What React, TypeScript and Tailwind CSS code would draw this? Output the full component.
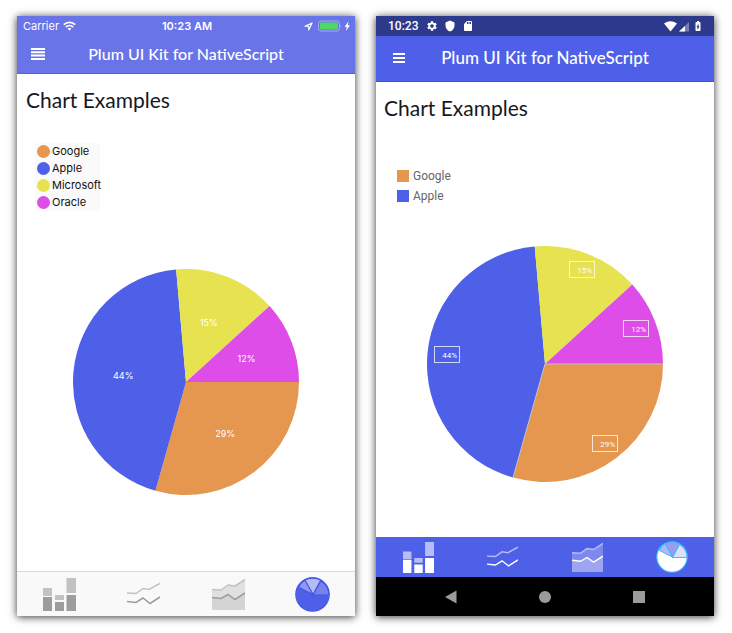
import { MdBatteryChargingFull, MdSdCard, MdSettings, MdShield } from "react-icons/md";

type Slice = {
  name: string;
  share: string;
  color: string;
  start: number;
  end: number;
};

const slices: Slice[] = [
  { name: "Google", share: "29%", color: "#e5964f", start: 254.3, end: 360 },
  { name: "Apple", share: "44%", color: "#4e5fe8", start: 95, end: 254.3 },
  { name: "Microsoft", share: "15%", color: "#e6e250", start: 42.3, end: 95 },
  { name: "Oracle", share: "12%", color: "#df4de8", start: 0, end: 42.3 },
];

function polar(center: number, radius: number, degrees: number): [number, number] {
  const a = (degrees * Math.PI) / 180;
  return [center + radius * Math.cos(a), center - radius * Math.sin(a)];
}

function slicePath(center: number, radius: number, slice: Slice) {
  const [x1, y1] = polar(center, radius, slice.start);
  const [x2, y2] = polar(center, radius, slice.end);
  return `M${center} ${center}L${x1} ${y1}A${radius} ${radius} 0 0 0 ${x2} ${y2}Z`;
}

function IosPie() {
  return (
    <svg viewBox="0 0 226 226" className="mx-auto w-[226px]" role="img" aria-label="Market share">
      {slices.map((s) => {
        const [x, y] = polar(113, s.name === "Oracle" || s.name === "Google" ? 65 : 63, (s.start + s.end) / 2);
        return (
          <g key={s.name}>
            <path d={slicePath(113, 113, s)} fill={s.color} />
            <text
              x={x}
              y={y + 3}
              textAnchor="middle"
              className="fill-white font-['Inter',sans-serif] text-[9px]"
            >
              {s.share}
            </text>
          </g>
        );
      })}
    </svg>
  );
}

function AndroidPie() {
  const edge = [polar(118, 118, 0), polar(118, 118, 254.3)];
  return (
    <svg viewBox="0 0 236 236" className="mx-auto w-[236px]" role="img" aria-label="Market share">
      {slices.map((s) => (
        <path key={s.name} d={slicePath(118, 118, s)} fill={s.color} />
      ))}
      {edge.map(([x, y]) => (
        <path key={x} d={`M118 118L${x} ${y}`} stroke="#c3c2c4" strokeWidth="1" />
      ))}
      {slices.map((s) => {
        const [x, y] = polar(118, s.name === "Google" ? 100 : s.name === "Microsoft" ? 101 : 98, (s.start + s.end) / 2);
        return (
          <g key={s.name}>
            <rect
              x={Math.round(x) - 12.5}
              y={Math.round(y) - 8.5}
              width="25"
              height="16"
              fill="none"
              stroke="#fff"
              strokeOpacity="0.75"
            />
            <text
              x={Math.round(x) + 10}
              y={Math.round(y) + 3}
              textAnchor="end"
              className="fill-white font-['Roboto',sans-serif] text-[8px]"
            >
              {s.share}
            </text>
          </g>
        );
      })}
    </svg>
  );
}

type Tone = { light: string; dark: string; area: string; areaLow: string };

const iosTone: Tone = { light: "#c2c2c2", dark: "#9d9d9d", area: "#e0e0e0", areaLow: "#d4d4d4" };
const androidTone: Tone = { light: "#b7bdf5", dark: "#ffffff", area: "#7d89ed", areaLow: "#9da5f1" };

function BarsIcon({ tone, className }: { tone: Tone; className: string }) {
  return (
    <svg viewBox="0 0 33 33" className={className} aria-hidden="true">
      <path d="M0 10h9v8H0zM12 17h9v5h-9zM23.500 0h9.500v15h-9.500z" fill={tone.light} />
      <path d="M0 19h9v14H0zM12 24h9v9h-9zM23.500 17h9.500v16h-9.500z" fill={tone.dark} />
    </svg>
  );
}

function LinesIcon({ tone, className }: { tone: Tone; className: string }) {
  return (
    <svg viewBox="0 0 33 33" className={className} fill="none" aria-hidden="true">
      <path d="M0 15l9 .5 7-5 6 1L33 5.500" stroke={tone.light} strokeWidth="1.500" />
      <path d="M0 23.500l9 1 7-4.500 7 5.500 10-6.500" stroke={tone.dark} strokeWidth="1.500" />
    </svg>
  );
}

function AreaIcon({ tone, className }: { tone: Tone; className: string }) {
  return (
    <svg viewBox="0 0 33 33" className={className} fill="none" aria-hidden="true">
      <path d="M0 11.500l9 .5 7-5 7 1L33 1.500V32H0z" fill={tone.area} />
      <path d="M0 19.500l9 1 7-4 7 5 10-6.500v17H0z" fill={tone.areaLow} />
      <path d="M0 11.500l9 .5 7-5 7 1L33 1.500" stroke={tone.light} strokeWidth="1.500" />
      <path d="M0 19.500l9 1 7-4 7 5 10-6.500" stroke={tone.dark} strokeWidth="1.500" />
    </svg>
  );
}

type PieTone = { base: string; right: string; top: string; left: string; line: string };

const iosPieTone: PieTone = { base: "#4e5fe8", right: "#7683ed", top: "#b4bbf5", left: "#8e98f0", line: "#4455e6" };
const androidPieTone: PieTone = { base: "#ffffff", right: "#dddffb", top: "#9a9cf0", left: "#b3b8f5", line: "#38b6ff" };

function PieIcon({ tone, className }: { tone: PieTone; className: string }) {
  return (
    <svg viewBox="0 0 34 34" className={className} aria-hidden="true">
      <circle cx="17" cy="17" r="16" fill={tone.base} />
      <g stroke={tone.line} strokeWidth="1">
        <path d="M17.500 17.500L25 4A16 16 0 0 1 33 17.500Z" fill={tone.right} />
        <path d="M17.500 17L9.500 3A16 16 0 0 1 25 3Z" fill={tone.top} />
        <path d="M17.500 17L3.500 10A16 16 0 0 1 9.500 3Z" fill={tone.left} />
      </g>
      <circle cx="17" cy="17" r="16.200" fill="none" stroke={tone.line} strokeWidth="1.200" />
    </svg>
  );
}

function TabBar({ tone, pieTone, size, pieSize, className }: {
  tone: Tone;
  pieTone: PieTone;
  size: string;
  pieSize: string;
  className: string;
}) {
  return (
    <nav className={`grid grid-cols-4 ${className}`}>
      <button aria-label="Bar chart" className="flex items-center justify-center">
        <BarsIcon tone={tone} className={size} />
      </button>
      <button aria-label="Line chart" className="flex items-center justify-center">
        <LinesIcon tone={tone} className={size} />
      </button>
      <button aria-label="Area chart" className="flex items-center justify-center">
        <AreaIcon tone={tone} className={size} />
      </button>
      <button aria-label="Pie chart" className="flex items-center justify-center">
        <PieIcon tone={pieTone} className={pieSize} />
      </button>
    </nav>
  );
}

function IosPhone() {
  return (
    <section className="flex flex-col bg-white shadow-[0_1px_8px_rgba(0,0,0,0.8)]">
      <header className="h-[58px] border-b border-[#4e5fe8] bg-[#6874e8] text-white">
        <div className="grid h-5 grid-cols-[1fr_auto_1fr] items-center pr-1 pl-[6px] font-['Inter',sans-serif] text-[11px]">
          <div className="flex items-center gap-1">
            <span>Carrier</span>
            <svg viewBox="0 0 13 10" className="w-[13px]" fill="none" stroke="currentColor" strokeWidth="1.800" aria-hidden="true">
              <path d="M.8 3.700a8.200 8.200 0 0 1 11.400 0M2.900 6a5.200 5.200 0 0 1 7.200 0" />
              <path d="M6.500 9.600L4.600 7.700a2.800 2.800 0 0 1 3.800 0z" fill="currentColor" stroke="none" />
            </svg>
          </div>
          <span className="font-semibold">10:23 AM</span>
          <div className="flex items-center justify-end gap-[5px]">
            <svg viewBox="0 0 10 10" className="w-[9px]" fill="none" stroke="currentColor" strokeWidth="1.200" aria-hidden="true">
              <path d="M9 1L1 4.800h4.200V9z" strokeLinejoin="round" />
            </svg>
            <svg viewBox="0 0 33 12" className="h-3 w-[33px]" aria-hidden="true">
              <rect x=".5" y="1" width="21" height="10" rx="2.500" fill="none" stroke="#a5acf1" />
              <rect x="2" y="2.500" width="18" height="7" rx="1" fill="#4cd964" />
              <path d="M22.500 4.500q1.500 1.500 0 3z" fill="#a5acf1" />
              <path d="M30.500 1.500L26.500 6.800h2.200L28 11 32 5.300h-2.200z" fill="#fff" />
            </svg>
          </div>
        </div>
        <div className="grid h-9 grid-cols-[1fr_auto_1fr] items-center px-[14px]">
          <button aria-label="Menu" className="w-4">
            <svg viewBox="0 0 14 12" className="w-[14px]" aria-hidden="true">
              <path d="M0 0h14v2H0zM0 3.300h14v2H0zM0 6.600h14v2H0zM0 9.900h14v2H0z" fill="#fff" />
            </svg>
          </button>
          <h1 className="font-['Lato',sans-serif] text-[16px] leading-5 font-medium">Plum UI Kit for NativeScript</h1>
        </div>
      </header>
      <main className="flex grow flex-col">
        <h2 className="px-[9px] pt-3 font-['Lato',sans-serif] text-[21px] leading-[28px] text-[#16181c]">Chart Examples</h2>
        <ul className="mt-[29px] ml-[18px] w-[65px] bg-[#fafafa] font-['Inter',sans-serif] text-[11px] leading-[17px] text-[#111]">
          {slices.map((s) => (
            <li key={s.name} className="flex items-center gap-[2px] pl-[2px]">
              <span className="size-[13px] shrink-0 rounded-full" style={{ backgroundColor: s.color }} />
              {s.name}
            </li>
          ))}
        </ul>
        <div className="pt-[58px] pb-[76px]">
          <IosPie />
        </div>
      </main>
      <TabBar
        tone={iosTone}
        pieTone={iosPieTone}
        size="w-[33px]"
        pieSize="w-[35px]"
        className="h-[45px] border-t border-[#d9d9d9] bg-[#f9f9f9]"
      />
    </section>
  );
}

function AndroidPhone() {
  return (
    <section className="flex flex-col bg-white shadow-[0_1px_8px_rgba(0,0,0,0.8)]">
      <header className="border-b border-[#3c4ee0] bg-[#4e5fe8] text-white">
        <div className="flex h-5 items-center justify-between bg-[#2d398b] pr-[10px] pl-3">
          <div className="flex items-center">
            <span className="font-['Roboto',sans-serif] text-[12px] font-medium">10:23</span>
            <div className="ml-2 flex gap-[6px]">
              <MdSettings className="size-3" />
              <MdShield className="size-3" />
              <MdSdCard className="size-3" />
            </div>
          </div>
          <div className="flex items-center gap-[2px]">
            <svg viewBox="0 0 26 11" className="w-[26px]" fill="#fff" aria-hidden="true">
              <path d="M0 2.500Q6.500-2 13 2.500L6.500 10.500z" />
              <path d="M25 1v9.500H15z" fillOpacity=".35" />
              <path d="M21 5v5.500H15z" />
            </svg>
            <MdBatteryChargingFull className="size-3" />
          </div>
        </div>
        <div className="grid h-[45px] grid-cols-[1fr_auto_1fr] items-center px-[17px] pb-px">
          <button aria-label="Menu" className="w-4">
            <svg viewBox="0 0 12 10" className="w-3" aria-hidden="true">
              <path d="M0 0h12v2H0zM0 4h12v2H0zM0 8h12v2H0z" fill="#fff" />
            </svg>
          </button>
          <h1 className="font-['Lato',sans-serif] text-[17px] leading-5 font-medium">Plum UI Kit for NativeScript</h1>
        </div>
      </header>
      <main className="flex grow flex-col">
        <h2 className="px-2 pt-3 font-['Lato',sans-serif] text-[21px] leading-[28px] text-[#16181c]">Chart Examples</h2>
        <ul className="mt-11 ml-[21px] font-['Roboto',sans-serif] text-[12px] leading-[20px] text-[#666]">
          {slices.slice(0, 2).map((s) => (
            <li key={s.name} className="flex items-center gap-1">
              <span className="size-3 shrink-0" style={{ backgroundColor: s.color }} />
              {s.name}
            </li>
          ))}
        </ul>
        <div className="pt-10 pb-[55px]">
          <AndroidPie />
        </div>
      </main>
      <TabBar
        tone={androidTone}
        pieTone={androidPieTone}
        size="w-[31px]"
        pieSize="w-8"
        className="h-10 bg-[#4e5fe8]"
      />
      <nav className="flex h-[39px] items-center justify-center gap-20 bg-black">
        <button aria-label="Back">
          <svg viewBox="0 0 14 14" className="w-[14px]" fill="#9b9b9b" aria-hidden="true">
            <path d="M12.500 .5v13L1 7z" />
          </svg>
        </button>
        <button aria-label="Home">
          <svg viewBox="0 0 14 14" className="w-[14px]" fill="#9b9b9b" aria-hidden="true">
            <circle cx="7" cy="7" r="6" />
          </svg>
        </button>
        <button aria-label="Recent apps">
          <svg viewBox="0 0 14 14" className="w-[14px]" fill="#9b9b9b" aria-hidden="true">
            <path d="M1 1h12v12H1z" />
          </svg>
        </button>
      </nav>
    </section>
  );
}

export default function App() {
  return (
    <div className="grid min-h-screen grid-cols-2 items-start gap-[21px] bg-white py-4 pr-[18px] pl-[17px]">
      <IosPhone />
      <AndroidPhone />
    </div>
  );
}
